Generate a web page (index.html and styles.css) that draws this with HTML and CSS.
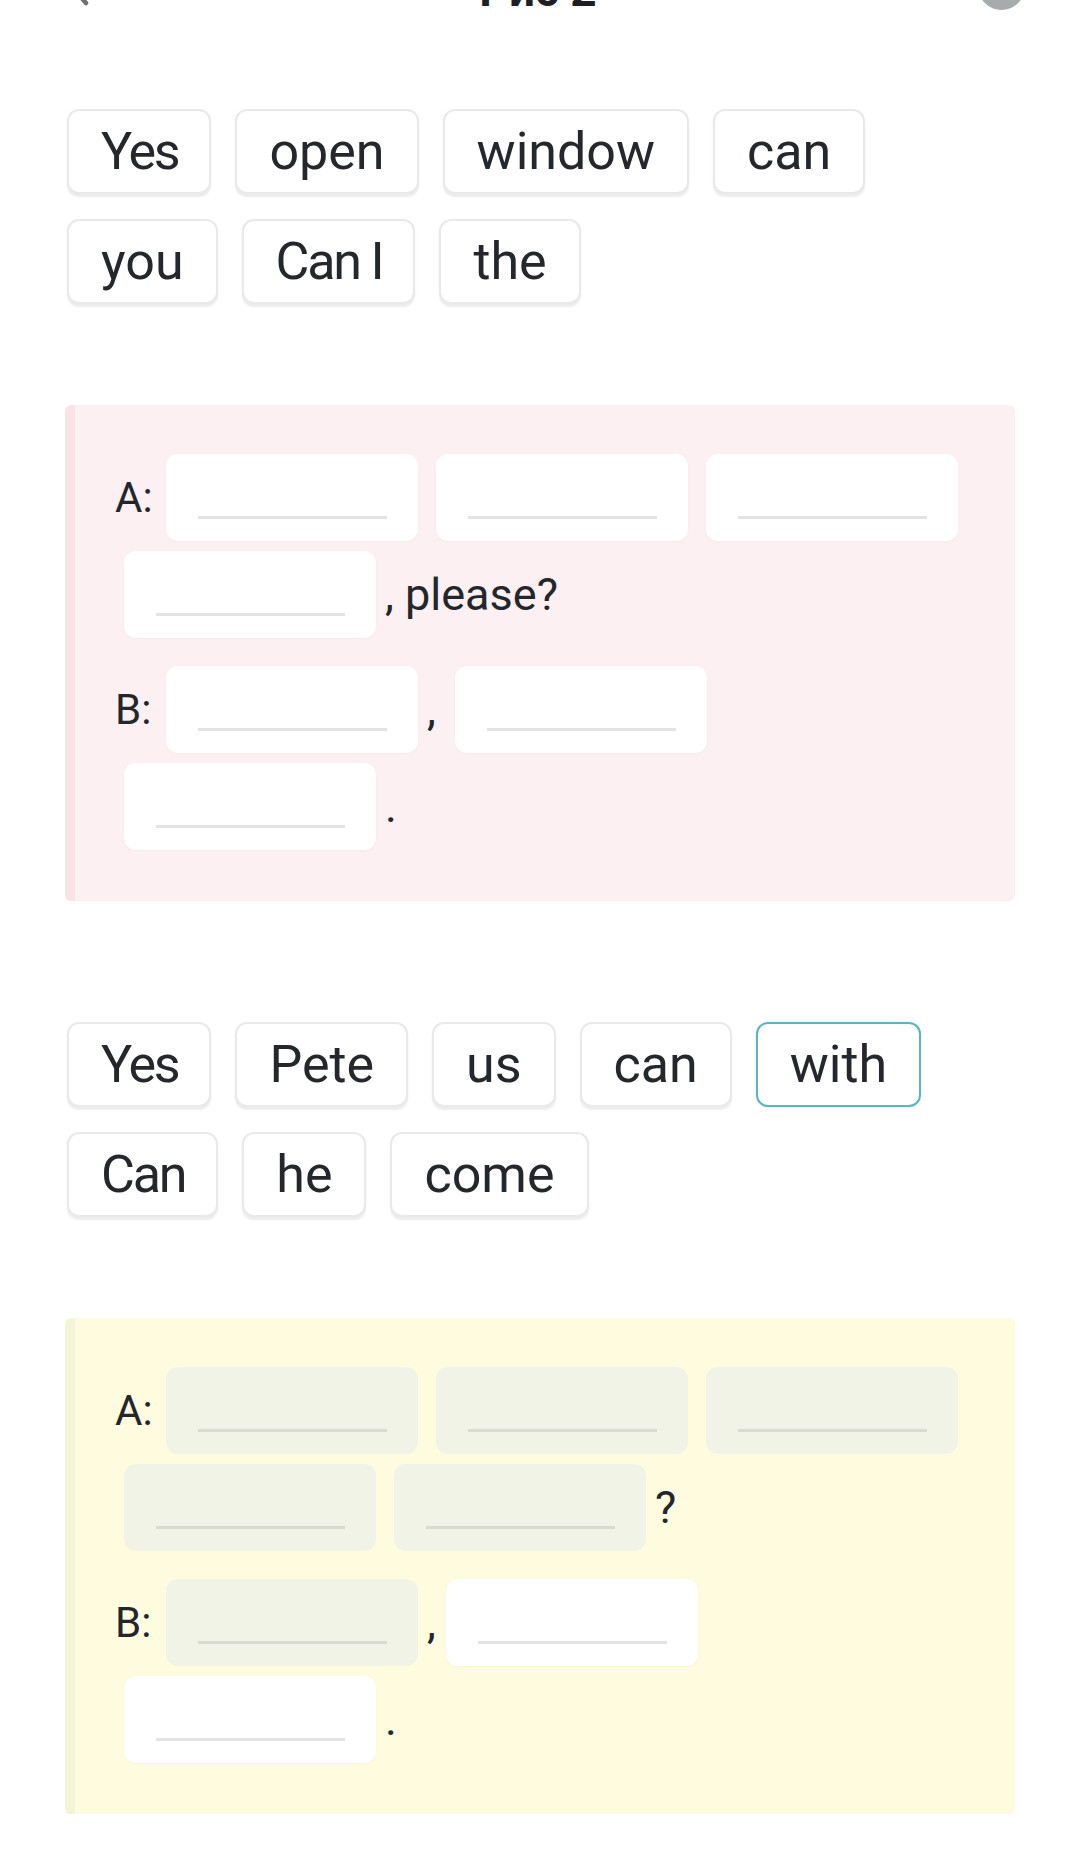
FILE: index.html
```html
<!DOCTYPE html>
<html lang="en">
<head>
<meta charset="utf-8">
<title>Рис 2</title>
<link rel="stylesheet" href="styles.css">
</head>
<body>
<header class="topbar">
  <span class="back"><svg width="24" height="40" viewBox="0 0 24 40"><path d="M20 3 L5 20 L20 37" fill="none" stroke="#6f6f6f" stroke-width="4.5" stroke-linecap="round" stroke-linejoin="round"/></svg></span>
  <span class="title">Рис 2</span>
  <span class="avatar"></span>
</header>
<main class="page">
  <div class="bank bank-first">
    <span class="chip chip-cap">Yes</span>
    <span class="chip">open</span>
    <span class="chip">window</span>
    <span class="chip">can</span>
    <span class="chip">you</span>
    <span class="chip chip-cap">Can I</span>
    <span class="chip">the</span>
  </div>

  <section class="dialog pink">
    <div class="turn">
      <span class="who">A:</span>
      <span class="blank"><span class="line"></span></span>
      <span class="blank"><span class="line"></span></span>
      <span class="blank"><span class="line"></span></span>
      <span class="blank"><span class="line"></span></span>
      <span class="punct">, please?</span>
    </div>
    <div class="turn">
      <span class="who">B:</span>
      <span class="blank"><span class="line"></span></span>
      <span class="punct">,</span>
      <span class="blank"><span class="line"></span></span>
      <span class="blank"><span class="line"></span></span>
      <span class="punct">.</span>
    </div>
  </section>

  <div class="bank bank-second">
    <span class="chip chip-cap">Yes</span>
    <span class="chip">Pete</span>
    <span class="chip">us</span>
    <span class="chip">can</span>
    <span class="chip chip-active">with</span>
    <span class="chip chip-cap">Can</span>
    <span class="chip">he</span>
    <span class="chip">come</span>
  </div>

  <section class="dialog yellow">
    <div class="turn">
      <span class="who">A:</span>
      <span class="blank filled"><span class="line"></span></span>
      <span class="blank filled"><span class="line"></span></span>
      <span class="blank filled"><span class="line"></span></span>
      <span class="blank filled"><span class="line"></span></span>
      <span class="blank filled"><span class="line"></span></span>
      <span class="punct">?</span>
    </div>
    <div class="turn">
      <span class="who">B:</span>
      <span class="blank filled"><span class="line"></span></span>
      <span class="punct punct-tight">,</span>
      <span class="blank"><span class="line"></span></span>
      <span class="blank"><span class="line"></span></span>
      <span class="punct">.</span>
    </div>
  </section>
</main>
</body>
</html>
```

FILE: styles.css
```css
* { box-sizing: border-box; }

html, body {
  margin: 0;
  padding: 0;
  background: #ffffff;
}

body {
  font-family: Roboto, "Noto Sans", "Liberation Sans", sans-serif;
  color: #25282d;
  width: 1080px;
  min-height: 1855px;
  overflow: hidden;
}

.topbar {
  height: 60px;
  margin-top: -44px;
  padding: 0 55px 0 66px;
  display: flex;
  align-items: center;
  justify-content: space-between;
}

.back {
  width: 24px;
  height: 40px;
  display: flex;
}

.title {
  font-size: 46px;
  font-weight: 700;
  line-height: 46px;
  color: #1d1f23;
  padding-top: 8px;
  margin-left: 8px;
}

.avatar {
  width: 47px;
  height: 47px;
  border-radius: 50%;
  background: #a8abae;
}

.page {
  padding: 0 65px;
}

.bank {
  display: flex;
  flex-wrap: wrap;
  gap: 25px 24px;
  padding-left: 2px;
}

.bank-first { margin-top: 93px; }
.bank-second { margin-top: 121px; }

.chip {
  height: 85px;
  padding: 0 32px;
  display: flex;
  align-items: center;
  font-size: 52px;
  color: #24272c;
  background: #ffffff;
  border: 2px solid #e9e9e9;
  border-radius: 12px;
  box-shadow: 0 3px 2px rgba(0, 0, 0, 0.08);
}

.chip-cap {
  letter-spacing: -2.2px;
  padding-right: 31px;
}

.chip-active {
  border-color: #5ab5c0;
  box-shadow: 0 0 3px rgba(90, 181, 192, 0.25);
}

.dialog {
  margin-top: 101px;
  padding: 49px 40px 51px 40px;
  border-left: 10px solid;
  border-radius: 6px;
}

.pink {
  background: #fdf0f2;
  border-left-color: #f9e3e7;
}

.yellow {
  background: #fefbdf;
  border-left-color: #f4f4d6;
}

.turn {
  display: flex;
  flex-wrap: wrap;
  align-items: center;
  row-gap: 10px;
}

.turn + .turn { margin-top: 28px; }

.who {
  width: 42px;
  font-size: 42px;
  color: #23262b;
}

.blank {
  width: 252px;
  height: 87px;
  margin: 0 9px;
  padding: 62px 31px 0 32px;
  background: #ffffff;
  border-radius: 12px;
  box-shadow: 0 1px 3px rgba(0, 0, 0, 0.03);
}

.blank .line {
  display: block;
  height: 3px;
  background: #e3e3e3;
}

.blank.filled {
  background: #f1f3e6;
  box-shadow: none;
}

.blank.filled .line {
  background: #dadbd0;
}

.punct {
  font-size: 45px;
  color: #23262b;
  margin-right: 10px;
}

.punct-tight { margin-right: 1px; }
```
